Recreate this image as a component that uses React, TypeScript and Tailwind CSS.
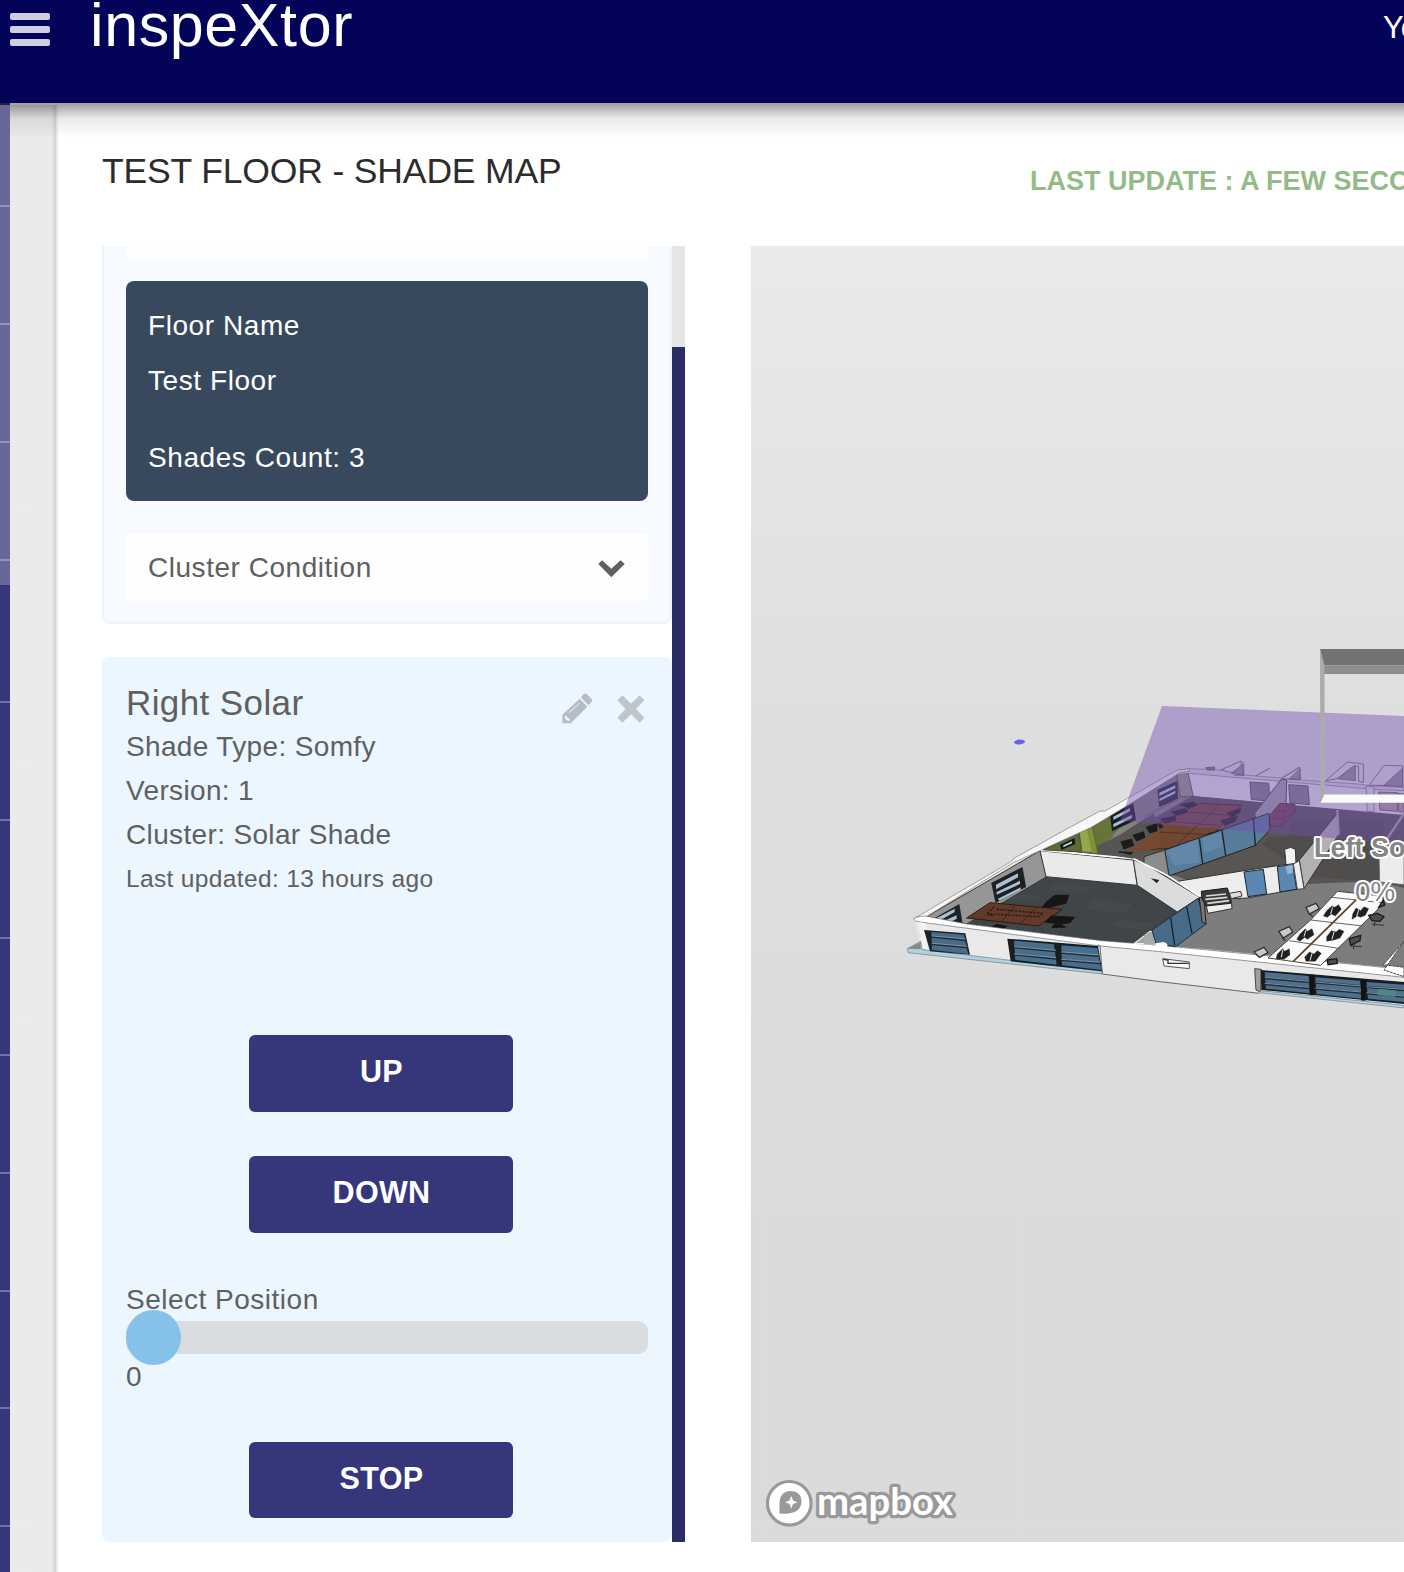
import React from "react";

const SIDEBAR_LINES = [100, 218, 336, 454, 596, 714, 832, 949, 1067, 1185, 1302, 1420];

function MenuIcon() {
  return (
    <div className="flex flex-col gap-[6px]">
      <span className="h-[7px] w-10 rounded-[2px] bg-[#cfcde0]" />
      <span className="h-[7px] w-10 rounded-[2px] bg-[#cfcde0]" />
      <span className="h-[7px] w-10 rounded-[2px] bg-[#cfcde0]" />
    </div>
  );
}

function Header() {
  return (
    <header className="relative z-10 h-[105px] shrink-0">
      <div className="flex h-[103px] items-start overflow-hidden bg-[#030359] text-white">
        <div className="ml-[10px] mt-[13px]">
          <MenuIcon />
        </div>
        <div className="ml-[40px] -mt-[13px] text-[61px] leading-[76px] tracking-[0.6px]">inspeXtor</div>
        <div className="ml-auto mt-[8px] w-[21px] whitespace-nowrap text-[31px] leading-[40px]">You</div>
      </div>
      <div className="ml-[10px] h-[2px] bg-[#a4a1b5]" />
    </header>
  );
}

function Sidebar() {
  return (
    <aside className="relative w-[10px] shrink-0 bg-[#36377a]">
      <div className="h-[480px] bg-[#67679a]" />
      {SIDEBAR_LINES.map((y) => (
        <div key={y} className="absolute left-0 h-[2px] w-full bg-white/30" style={{ top: y }} />
      ))}
      <div className="absolute top-[-2px] left-0 h-[2px] w-full bg-[#26262c]" />
    </aside>
  );
}

function ChevronIcon() {
  return (
    <svg width="27" height="18" viewBox="202 61 81 54" fill="#606060" className="mt-[4px]">
      <path d="M203 73L214 62L242 87L270 62L282 73L242 113Z" />
    </svg>
  );
}

function PencilIcon() {
  return (
    <svg width="31" height="31" viewBox="95 457 93 93">
      <path
        fill="#b6bcc4"
        d="M96 522L148 474L171 498L121 548H96ZM152 470L160 461Q165 456 170 461L184 475Q188 480 184 484L174 494Z"
      />
      <path d="M115 517L149 486" stroke="#ebf5ff" strokeWidth="3" />
      <path d="M103 527L109 526L112 532L119 534L118 541L109 539L104 534Z" fill="#ebf5ff" />
    </svg>
  );
}

function CloseIcon() {
  return (
    <svg width="28" height="28" viewBox="261 464 84 84" className="mt-[2px]">
      <path
        fill="#bdc5cd"
        d="M277 465L303 490L329 465L343 480L318 506L343 532L329 547L303 522L277 547L262 532L287 506L262 480Z"
      />
    </svg>
  );
}

function ActionButton({ label, className }: { label: string; className: string }) {
  return (
    <button
      className={
        "ml-[123px] flex w-[264px] items-start justify-center rounded-[6px] bg-[#36377a] pl-[1px] text-[30.5px] leading-[74px] font-bold text-white " +
        className
      }
    >
      <span className="-mt-px">{label}</span>
    </button>
  );
}

function FloorCard() {
  return (
    <section className="h-[378px] rounded-b-[8px] border-2 border-t-0 border-[#e9f5ff] bg-[#f7fbff] px-[22px]">
      <div className="h-[13px] bg-[#fdfeff]" />
      <div className="mt-[22px] h-[220px] rounded-[8px] bg-[#38495d] px-[22px] pt-[23px] text-[28px] tracking-[0.57px] text-white">
        <p className="leading-[44px]">Floor Name</p>
        <p className="mt-[11px] leading-[44px]">Test Floor</p>
        <p className="mt-[33px] leading-[44px]">Shades Count: 3</p>
      </div>
      <div className="mt-[33px] flex h-[66px] items-center justify-between bg-[#fefeff] pr-[23px] pl-[22px] text-[28px] tracking-[0.53px] text-[#606060]">
        <span className="pt-[2px]">Cluster Condition</span>
        <ChevronIcon />
      </div>
    </section>
  );
}

function ShadeCard() {
  return (
    <section className="mt-[33px] h-[885px] rounded-[8px] bg-[#ebf6ff] px-6 pt-6 text-[28px] leading-[44px] tracking-[0.35px] text-[#606060]">
      <div className="flex h-[44px] justify-between">
        <h2 className="text-[35px] tracking-[0.4px]">Right Solar</h2>
        <div className="mr-[3px] flex items-start gap-[24px] pt-[12px]">
          <PencilIcon />
          <CloseIcon />
        </div>
      </div>
      <p>Shade Type: Somfy</p>
      <p>Version: 1</p>
      <p>Cluster: Solar Shade</p>
      <p className="text-[24.5px]">Last updated: 13 hours ago</p>
      <ActionButton label="UP" className="mt-[134px] h-[77px]" />
      <ActionButton label="DOWN" className="mt-[44px] h-[77px]" />
      <p className="mt-[45px] h-[43px] tracking-[0.5px]">Select Position</p>
      <div className="flex h-[33px] items-center rounded-[10px] bg-[#d9dde0]">
        <div className="size-[55px] shrink-0 rounded-full bg-[#85c1e9]" />
      </div>
      <p className="mt-px h-[43px]">0</p>
      <ActionButton label="STOP" className="mt-[44px] h-[76px]" />
    </section>
  );
}

function FloorModel() {
  return (
    <>
      {/* building shell */}
      <path d="M914 918L1012 861L1100 812L1177 770L1194 768L1404 786V1008L921 950Z" fill="#e6e6e6" />
      <path d="M1128 812L1190 795L1404 812V969L1205 949L1177 947Z" fill="#7d7d7d" />
      {/* meeting room */}
      <path d="M1043 848L1180 774L1194 796L1270 804L1404 816V888L1250 850L1240 900L1134 860Z" fill="#555352" />
      <path d="M1041 850L1180 773L1193 796L1096 853Z" fill="#85827c" />
      <path d="M1043 849L1126 802L1134 812L1097 852Z" fill="#5e6b36" />
      <path d="M1188 771L1404 787V818L1270 803L1194 796Z" fill="#e9e7ea" />
      <path d="M1096 852L1192 796L1404 815V880L1306 884L1170 875Z" fill="#585553" />
      <g transform="translate(1144 630) scale(.33333)">
        {/* rear walls and doors */}
        <path d="M98 430L132 428L148 500L108 500Z" fill="#9b9982" stroke="#555" strokeWidth="3" />
        <path d="M98 422L140 416L230 420L290 394L300 398V436L270 436L290 434L412 444L464 412L472 450L640 462L690 468L780 472V482L690 478L412 454L270 442L136 430L98 434Z" fill="#dcd8e0" stroke="#777" strokeWidth="2" />
        <path d="M230 420L290 394L300 436ZM412 446L468 412V450ZM545 452L610 396L658 402V458L644 454V408L628 408L580 446ZM676 466L720 406L776 408V468L700 466Z" fill="#e2e0e4" stroke="#777" strokeWidth="3" />
        <path d="M262 430L297 402V436ZM436 446L468 416V450ZM580 446L634 408V452ZM720 466L776 414V470Z" fill="#95919a" stroke="#555" strokeWidth="2" />
        <path d="M186 413L212 411V420H190ZM336 437L378 414" fill="#777" stroke="#666" strokeWidth="3" />
        <path d="M318 456L374 460L378 514L322 508ZM434 464L492 468L496 524L438 518Z" fill="#86808c" stroke="#555" strokeWidth="3" />
        <path d="M704 486L760 488V544L708 540ZM762 490L780 492V546H764Z" fill="#b3a092" stroke="#666" strokeWidth="3" />
        <path d="M332 550L412 448L428 450L426 524L344 610Z" fill="#a5a3a8" stroke="#444" strokeWidth="3" />
        <path d="M666 468L690 472V546L670 544Z" fill="#e4e0e8" stroke="#666" strokeWidth="2" />
        <path d="M374 560L408 520L452 522L452 548L412 590L378 586Z" fill="#75464b" stroke="#4a3038" strokeWidth="3" />
        <path d="M388 542L426 544L450 524M378 564L418 568L452 540M428 522L412 588" stroke="#4a3038" strokeWidth="2" fill="none" />
        <path d="M40 480L100 452L102 506L46 532Z" fill="#292a31" />
        <path d="M46 488L94 466V474L46 498ZM46 506L94 482V490L46 514Z" fill="#b9cbe0" />
        <path d="M0 582L38 560M0 560L104 508" stroke="#555" strokeWidth="2" />
        {/* conference table */}
        <path d="M168 520L292 526L170 650L-10 660L-80 640Z" fill="#704733" stroke="#40251a" strokeWidth="3" />
        <path d="M130 546L262 556M90 576L226 586M40 606L190 614M228 522L90 654" stroke="#40251a" strokeWidth="2" />
        <path d="M110 524L150 516L160 524L134 534ZM82 546L124 536L130 546L100 556ZM50 568L92 558L96 570L64 580ZM8 590L50 580L56 592L20 600ZM250 548L290 536L286 548L262 562ZM230 572L280 560L272 574L244 586ZM190 612L240 598L230 612L200 622ZM166 640L212 622L200 638Z" fill="#252224" stroke="#252224" strokeWidth="3" />
      </g>
      <g transform="translate(1144 820) scale(.33333)">
        {/* glass partition and corridor walls */}
        <path d="M355 72L375 50L430 50L440 0H720L705 184L505 172Z" fill="#504e4c" />
        <path d="M62 90L375 -20L378 30L335 76L75 168Z" fill="#587c9b" stroke="#222" strokeWidth="3" />
        <path d="M166 56L176 132M234 32L245 106M328 -6L334 76" stroke="#222" strokeWidth="4" />
        <path d="M66 92L160 58L168 128L90 136ZM176 54L230 36L238 80L180 100Z" fill="#6a93b5" opacity=".5" />
        <path d="M0 110L62 90L75 166L36 150L0 132Z" fill="#8b8b8b" stroke="#333" strokeWidth="3" />
        <path d="M100 184L300 152L448 130L478 204L310 234L170 240Z" fill="#ededed" stroke="#333" strokeWidth="3" />
        <path d="M300 156L358 148L368 222L312 230ZM400 140L446 134L458 208L408 216Z" fill="#5a88b2" stroke="#222" strokeWidth="3" />
        <path d="M424 138L446 134L448 158L430 162Z" fill="#8eb4d8" />
        <path d="M466 120L580 -20L584 44L480 206Z" fill="#b3b0b3" stroke="#333" strokeWidth="3" />
        <path d="M422 88L440 82L454 88L456 130L426 134Z" fill="#f4f4f4" stroke="#333" strokeWidth="3" />
        <path d="M448 132L466 122L480 206L460 208Z" fill="#ededed" stroke="#444" strokeWidth="3" />
        <path d="M705 96L780 92V194L707 186Z" fill="#ececec" stroke="#555" strokeWidth="2" />
        <path d="M580 -30L584 44M780 -20L720 70" stroke="#aaa1b5" strokeWidth="7" />
      </g>
      <g transform="translate(900 820) scale(.33333)">
        {/* corner room */}
        <path d="M438 170L712 195L790 238L830 270L900 235L905 310L820 380L605 366L200 312Z" fill="#404548" />
        <path d="M470 190L580 200L550 220L440 210ZM580 240L700 252L670 280L550 268ZM330 220L430 230L400 245L300 238ZM650 300L760 310L740 330L630 320Z" fill="#4a5053" opacity=".4" />
        <path d="M80 290L420 92L440 170L200 312L160 306Z" fill="#969696" stroke="#333" strokeWidth="3" />
        <path d="M420 92L700 120L712 196L438 170Z" fill="#eaeaea" stroke="#333" strokeWidth="3" />
        <path d="M700 120L740 135L900 232L832 276L712 196Z" fill="#dcdcdc" stroke="#333" strokeWidth="3" />
        <path d="M418 90L700 116L800 165L900 230" fill="none" stroke="#fff" strokeWidth="5" />
        <path d="M752 175L778 180L770 190L762 182Z" fill="#222" />
        <path d="M276 190L366 144L376 200L288 246Z" fill="#1e2022" stroke="#1e2022" strokeWidth="4" />
        <path d="M288 194L354 160V172L288 208ZM290 216L360 182V192L290 224ZM294 236L362 202V210L298 242Z" fill="#a9c0d6" />
        <path d="M100 296L178 252L188 312L110 302Z" fill="#202326" />
        <path d="M106 296L164 266V276L118 302ZM130 304L170 286V296L152 306Z" fill="#a7c0d4" />
        <path d="M200 294L270 248L486 268L416 318Z" fill="#623a2b" stroke="#32190f" strokeWidth="3" />
        <path d="M282 260L260 282L282 288M290 268L430 280L415 290L270 282" fill="none" stroke="#2d1812" strokeWidth="4" strokeDasharray="7 4" />
        <path d="M345 257L305 303M408 264L360 312" stroke="#32190f" strokeWidth="2" />
        <path d="M440 245L465 226L506 226L498 250L470 256L450 262L428 260ZM436 306L454 288L524 292L510 308L482 312L496 322H456L466 310Z" fill="#151515" stroke="#151515" strokeWidth="3" />
        <path d="M275 320L290 312L322 318L312 328Z" fill="#151515" />
        {/* green room */}
        <path d="M430 90L536 36L546 96Z" fill="#5e6b36" stroke="#333" strokeWidth="2" />
        <path d="M480 74L524 54L526 72L484 90Z" fill="#16191a" />
        <path d="M490 76L516 64V70L490 82Z" fill="#c2d1da" />
        <path d="M536 24L576 22L592 98L546 96Z" fill="#94a84c" stroke="#556026" strokeWidth="3" />
        <path d="M560 28L576 22L592 98L576 100Z" fill="#7c9138" />
        <path d="M580 16L636 -14L640 50L592 78Z" fill="#66743a" />
        <path d="M630 -16L700 -50L708 0L636 34Z" fill="#1b1e20" />
        <path d="M640 -10L690 -36V-26L640 0ZM640 12L696 -16V-6L640 22Z" fill="#a9c0d6" />
        <path d="M592 78L660 44L760 -20L780 30L700 116L596 100Z" fill="#575554" />
        <path d="M684 90L780 26V82L722 96Z" fill="#764a30" />
        <path d="M664 66L694 58L700 76L672 86ZM700 46L730 36L734 52L710 62ZM740 22L770 12V32L750 38ZM656 96L696 98L690 104" fill="#1b1b1b" stroke="#1b1b1b" strokeWidth="4" />
        <path d="M42 296L335 124L340 116L495 30L600 -27H615L832 -150L868 -154L868 -146L840 -142L732 -74L680 -42L574 22L420 92L340 128L76 292Z" fill="#f7f7f7" stroke="#777" strokeWidth="2" />
        {/* front wall */}
        <path d="M42 296Q40 308 65 306L600 374L780 393L1512 466V566L780 485L607 462L84 392Z" fill="#e9e9e9" />
        <path d="M42 298Q42 290 76 288L200 312L605 362L780 376L1512 448V472L780 395L600 378L60 306Q42 304 42 298Z" fill="#fff" stroke="#666" strokeWidth="2" />
        <path d="M56 306L78 310L84 392L66 384Z" fill="#f2f2f2" />
        <path d="M22 386L62 364L66 388L90 392L607 454V462L24 398Z" fill="#b3cfe2" stroke="#6a7980" strokeWidth="2" />
        <path d="M22 386L62 366V388Z" fill="#85898a" />
        <path d="M72 330L196 340L210 404L90 394Z" fill="#1d2428" />
        <path d="M94 336L192 344L204 402L96 390Z" fill="#486b89" />
        <path d="M94 350L196 360M94 372L202 382" stroke="#202a31" strokeWidth="6" />
        <path d="M96 348L196 357M96 370L202 379" stroke="#a9c2d3" strokeWidth="2" />
        <path d="M322 356L594 378L607 454L332 424Z" fill="#171d21" />
        <path d="M342 362L462 373L470 434L346 420ZM484 376L592 384L604 450L486 436Z" fill="#486d8d" />
        <path d="M342 382L468 394M342 404L468 416M484 398L596 408M484 420L600 430" stroke="#202a31" strokeWidth="6" />
        <path d="M342 380L468 391M342 402L468 413M484 396L596 405M484 418L600 427" stroke="#a9c2d3" strokeWidth="2" />
        <path d="M594 374L600 378L607 462L780 485L1077 520" fill="none" stroke="#666" strokeWidth="3" />
        <path d="M704 370L750 334L764 336L766 372Z" fill="#a4a4a4" stroke="#eee" strokeWidth="4" />
      </g>
      <g transform="translate(1144 820) scale(.33333)">
        <path d="M24 330L162 235L186 312L95 380L36 372Z" fill="#486b88" stroke="#1e2c36" strokeWidth="3" />
        <path d="M80 294L92 376M128 260L144 340" stroke="#17242e" strokeWidth="4" />
        <path d="M166 232L180 232L186 312L174 306Z" fill="#777" stroke="#222" strokeWidth="3" />
        <path d="M0 346L22 334L34 374L0 372Z" fill="#aaa" />
        <path d="M34 370L60 366L70 372V382L36 380Z" fill="#fff" />
        <path d="M56 416L136 426V446L60 438Z" fill="#f7f7f7" stroke="#555" strokeWidth="3" />
        <path d="M58 418L72 420V430H134" fill="none" stroke="#333" strokeWidth="4" />
        {/* copier */}
        <path d="M186 254L262 240L264 266L192 280Z" fill="#eee" stroke="#333" strokeWidth="3" />
        <path d="M172 214L250 204L256 222L260 250L186 258L174 236Z" fill="#3a3c3b" stroke="#171717" strokeWidth="3" />
        <path d="M256 220L290 214L294 228L262 236Z" fill="#dedede" stroke="#333" strokeWidth="3" />
        <path d="M186 228L246 222M184 238L250 232M190 250L256 242" stroke="#d6dcdb" strokeWidth="5" />
        {/* desks */}
        <path d="M580 214L715 228L720 250L530 436L372 414L500 300Z" fill="#fbfbfb" stroke="#444" strokeWidth="3" />
        <path d="M564 232L712 248M500 300L656 318M436 362L590 386" stroke="#666" strokeWidth="3" />
        <path d="M640 236L448 424" stroke="#59401f" strokeWidth="5" />
        <path d="M548 272L564 258L572 262L584 254L592 268L574 288L562 282L550 292L538 288ZM468 342L484 326L490 334L504 326L510 344L490 358L482 352L468 364L458 358ZM400 402L416 386L422 394L436 386L438 404L420 418L396 416ZM626 282L636 264L650 272L660 260L674 266L664 286L650 292L640 288L624 298ZM548 350L562 332L576 336L586 328L600 334L588 354L570 360L548 364ZM482 412L496 396L510 402L520 392L532 400L514 424L486 424Z" fill="#202020" stroke="#202020" strokeWidth="1" />
        <path d="M566 262L560 282M486 330L480 350M416 390L412 412M644 270L638 290M570 336L564 358M504 400L498 422" stroke="#e8e8e8" strokeWidth="3" />
        <path d="M486 262L516 250L526 266L496 282ZM404 334L436 320L446 336L418 354ZM330 396L360 382L372 398L346 412Z" fill="#c9c9c9" stroke="#333" strokeWidth="4" />
        <path d="M494 280L506 290M414 352L424 362" stroke="#333" strokeWidth="4" />
        <path d="M674 286L700 280L720 290L708 304L684 302ZM616 356L650 346L648 362L620 376ZM550 420L578 416L580 430L552 434ZM704 262L718 240L722 256Z" fill="#4d4d4d" stroke="#191919" strokeWidth="4" />
        <path d="M684 312L720 316M694 302L690 320M618 378L654 380M632 366L628 388" stroke="#333" strokeWidth="3" />
        <path d="M780 364L718 434L780 442V470L720 450Z" fill="#fff" stroke="#444" strokeWidth="3" strokeDasharray="9 2" />
        {/* front windows */}
        <path d="M332 446L352 448L350 516L336 510Z" fill="#a0a0a0" stroke="#444" strokeWidth="3" />
        <path d="M350 450L780 486V552L352 510Z" fill="#171d21" />
        <path d="M362 456L494 468L498 520L366 506ZM514 472L648 482L654 536L518 522ZM668 486L780 494V546L672 536Z" fill="#4d708e" />
        <path d="M362 474L780 510M362 492L780 530" stroke="#202a31" strokeWidth="7" />
        <path d="M362 472L496 484M514 486L650 498M668 500L780 508M362 490L496 502M514 504L650 516M668 518L780 528" stroke="#a9c2d3" strokeWidth="2" />
        <path d="M504 464V526M658 480V542" stroke="#101315" strokeWidth="14" />
        <path d="M704 506L758 512L752 532L700 526Z" fill="#4f8d86" opacity=".8" />
        <path d="M350 512L780 556V564L346 518Z" fill="#b3d4ea" stroke="#6a7980" strokeWidth="2" />
      </g>
    </>
  );
}

function MapView() {
  return (
    <div className="ml-[66px] h-[1296px] w-[653px] bg-linear-to-b from-[#eaeaea] from-0% via-[#dfdfdf] via-35% to-[#dbdbdb] to-75%">
      <svg width="653" height="1296" viewBox="751 246 653 1296" className="block">
        <ellipse cx="1019.5" cy="742" rx="5.5" ry="2.4" fill="#6765e6" transform="rotate(-6 1019.5 742)" />
        <FloorModel />
        <path d="M1162 706L1404 716V844L1120 821Z" fill="#704fb2" opacity=".45" />
        {/* raised shade frame */}
        <path d="M1320 649H1404V665.5H1324Z" fill="#737373" />
        <path d="M1324 665.5H1404V674H1324Z" fill="#8d8d8d" />
        <path d="M1320 649L1324.500 665.500V796L1320.500 802Z" fill="#ababab" />
        <path d="M1324.500 794.500H1404V802.800H1320.500Z" fill="#fafafa" />
        <g fill="#858585" stroke="#fff" strokeWidth="4" strokeLinejoin="round" fontFamily="Liberation Sans, sans-serif" style={{ paintOrder: "stroke" }}>
          <text x="1314" y="857" fontSize="27" fontWeight="700">Left Solar</text>
          <text x="1355" y="901" fontSize="27" textLength="40" lengthAdjust="spacingAndGlyphs">0%</text>
        </g>
        {/* attribution logo */}
        <circle cx="789.300" cy="1503.300" r="21.800" fill="#fff" stroke="#999" strokeWidth="3.200" />
        <path d="M779.500 1513.500V1503Q780 1491 791 1491Q801.500 1491.500 801.500 1501.500Q801 1513.500 785 1513.700Z" fill="#999" />
        <path d="M791.300 1496L793 1500.500L797.500 1502.200L793 1504L791.300 1508.500L789.500 1504L785 1502.200L789.500 1500.500Z" fill="#fff" />
        <text x="817" y="1514.500" fontSize="38" fontWeight="700" fontFamily="Lato, sans-serif" textLength="136" lengthAdjust="spacingAndGlyphs" fill="#fff" stroke="#999" strokeWidth="6.500" strokeLinejoin="round" style={{ paintOrder: "stroke" }}>
          mapbox
        </text>
      </svg>
    </div>
  );
}

export default function App() {
  return (
    <div className="flex h-[1572px] w-[1404px] flex-col overflow-hidden bg-white font-['Liberation_Sans',sans-serif]">
      <Header />
      <div className="relative flex flex-1">
        <Sidebar />
        <div className="w-[46px] shrink-0 bg-linear-to-r from-[#ebebeb] from-90% to-[#d2d2d2]" />
        <main className="min-w-0 flex-1 border-l-2 border-[#ebebeb] bg-white pl-[44px]">
          <div className="flex h-[141px] items-start justify-between whitespace-nowrap">
            <h1 className="mt-[44px] text-[35.5px] leading-[44px] tracking-[-0.15px] text-[#2c2c2c]">TEST FLOOR - SHADE MAP</h1>
            <div className="mt-[54px] w-[374px] text-[27px] leading-[44px] font-bold text-[#93bb88]">
              LAST UPDATE : A FEW SECONDS AGO
            </div>
          </div>
          <div className="flex">
            <div className="h-[1296px] w-[570px] shrink-0 overflow-hidden">
              <FloorCard />
              <ShadeCard />
            </div>
            <div className="h-[1296px] w-[13px] shrink-0 bg-[#e5e5e5] pt-[101px]">
              <div className="h-full bg-[#2c2d64]" />
            </div>
            <MapView />
          </div>
        </main>
        <div className="pointer-events-none absolute top-0 right-0 left-[10px] h-[34px] bg-linear-to-b from-black/35 via-black/8 via-40% to-transparent" />
      </div>
    </div>
  );
}
